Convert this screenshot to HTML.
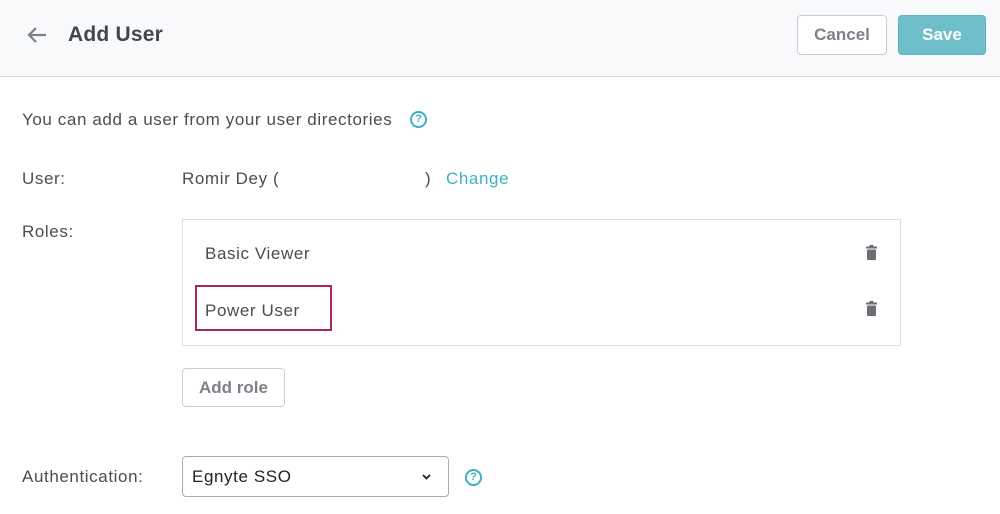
<!DOCTYPE html>
<html><head><style>
*{margin:0;padding:0;box-sizing:border-box}
body{width:1000px;height:514px;background:#fff;font-family:"Liberation Sans",sans-serif;color:#3d4046;position:relative;overflow:hidden}
.hdr{position:absolute;left:0;top:0;width:1000px;height:77px;background:#f8f9fb;border-bottom:1px solid #d9dce1}
.a{position:absolute;white-space:nowrap}
.t{font-size:17px;color:#4a4d52;letter-spacing:0.6px}
.btn{position:absolute;border-radius:4px;font-weight:bold;font-size:17px;text-align:center}
.help{position:absolute;width:17px;height:17px;border:2px solid #3fb0c4;border-radius:50%;color:#3fb0c4;font-size:11px;font-weight:bold;text-align:center;line-height:13px}
.trash{position:absolute;width:11px;height:15px}
</style></head><body>
<div class="hdr"></div>
<svg class="a" style="left:26px;top:26px" width="22" height="18" viewBox="0 0 22 18"><path d="M20 9H3M10 2L3 9l7 7" stroke="#7d8188" stroke-width="2.2" fill="none"/></svg>
<div class="a" style="left:68px;top:23px;font-size:21px;font-weight:bold;color:#43474d;letter-spacing:0.2px">Add User</div>
<div class="btn" style="left:797px;top:15px;width:90px;height:40px;border:1px solid #c9ced6;background:#fff;color:#7d828a;line-height:38px">Cancel</div>
<div class="btn" style="left:898px;top:15px;width:88px;height:40px;border:1px solid #5fb3c0;background:#6fbfca;color:#fff;line-height:38px">Save</div>

<div class="a t" style="left:22px;top:110px">You can add a user from your user directories</div>
<div class="help" style="left:410px;top:111px">?</div>

<div class="a t" style="left:22px;top:169px">User:</div>
<div class="a t" style="left:182px;top:169px">Romir Dey (</div>
<div class="a t" style="left:425px;top:169px">)</div>
<div class="a t" style="left:446px;top:169px;color:#3fb0c4">Change</div>

<div class="a t" style="left:22px;top:222px">Roles:</div>
<div class="a" style="left:182px;top:219px;width:719px;height:127px;border:1px solid #dcdfe3"></div>
<div class="a t" style="left:205px;top:244px">Basic Viewer</div>
<div class="a" style="left:195px;top:285px;width:137px;height:46px;border:2px solid #a8285a"></div>
<div class="a t" style="left:205px;top:301px">Power User</div>
<svg class="trash" style="left:866px;top:245px" viewBox="0 0 11 15"><rect x="0" y="1.5" width="11" height="2" fill="#6b6e73"/><rect x="3.5" y="0" width="4" height="2" fill="#6b6e73"/><rect x="1" y="4.5" width="9" height="10.5" rx="1" fill="#6b6e73"/></svg>
<svg class="trash" style="left:866px;top:301px" viewBox="0 0 11 15"><rect x="0" y="1.5" width="11" height="2" fill="#6b6e73"/><rect x="3.5" y="0" width="4" height="2" fill="#6b6e73"/><rect x="1" y="4.5" width="9" height="10.5" rx="1" fill="#6b6e73"/></svg>

<div class="btn" style="left:182px;top:368px;width:103px;height:39px;border:1px solid #c9d0d8;background:#fff;color:#7d828a;line-height:37px">Add role</div>

<div class="a t" style="left:22px;top:467px">Authentication:</div>
<div class="a" style="left:182px;top:456px;width:267px;height:41px;border:1px solid #a9adb3;border-radius:4px"></div>
<div class="a t" style="left:192px;top:467px;color:#222">Egnyte SSO</div>
<svg class="a" style="left:421px;top:473px" width="11" height="8" viewBox="0 0 11 8"><path d="M2 2l3.5 3.5L9 2" stroke="#222" stroke-width="1.8" fill="none"/></svg>
<div class="help" style="left:465px;top:469px">?</div>
</body></html>
